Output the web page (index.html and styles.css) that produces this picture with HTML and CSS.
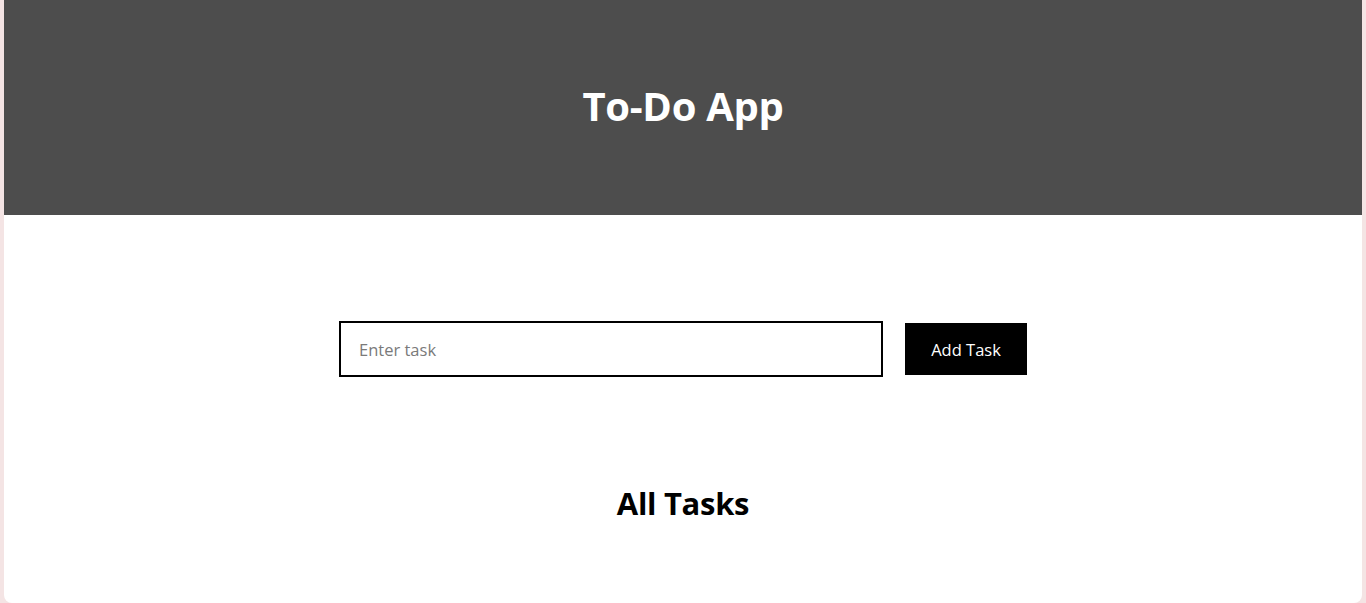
FILE: index.html
```html
<!DOCTYPE html>
<html lang="en">
<head>
<meta charset="utf-8">
<title>To-Do App</title>
<link rel="stylesheet" href="styles.css">
</head>
<body>
  <div class="card">
    <header class="header">
      <h1 class="title">To-Do App</h1>
    </header>
    <main class="main">
      <form class="task-form">
        <input class="task-input" type="text" placeholder="Enter task">
        <button class="task-btn" type="button">Add Task</button>
      </form>
      <h2 class="subtitle">All Tasks</h2>
    </main>
  </div>
</body>
</html>
```
FILE: styles.css
```css
* { box-sizing: border-box; }
html, body { margin: 0; padding: 0; }
body {
  background: #f4e4e4;
  font-family: "Open Sans", "Noto Sans", sans-serif;
  height: 603px;
  overflow: hidden;
}
.card {
  margin: 0 4px;
  height: 603px;
  background: #ffffff;
  border-radius: 0 0 8px 8px;
  display: flex;
  flex-direction: column;
  overflow: hidden;
}
.header {
  height: 215px;
  background: #4d4d4d;
  display: flex;
  align-items: center;
  justify-content: center;
  padding-bottom: 3px;
}
.title {
  margin: 0;
  color: #ffffff;
  font-size: 40px;
  font-weight: 700;
  line-height: 1;
  letter-spacing: -0.3px;
}
.main {
  display: flex;
  flex-direction: column;
  align-items: center;
  padding-top: 106px;
}
.task-form {
  display: flex;
  align-items: center;
  gap: 22px;
  margin: 0;
}
.task-input {
  width: 544px;
  height: 56px;
  border: 2px solid #000000;
  border-radius: 0;
  padding: 0 18px;
  font-family: "Open Sans", "Noto Sans", sans-serif;
  font-size: 16.5px;
  outline: none;
}
.task-input::placeholder { color: #7a7a7a; }
.task-btn {
  width: 122px;
  height: 52px;
  background: #000000;
  color: #ffffff;
  border: none;
  border-radius: 0;
  font-family: "Open Sans", "Noto Sans", sans-serif;
  font-size: 16.5px;
  padding: 0;
}
.subtitle {
  margin: 106px 0 0;
  font-size: 31px;
  font-weight: 700;
  line-height: 40px;
  color: #000000;
  letter-spacing: -0.3px;
}
```
